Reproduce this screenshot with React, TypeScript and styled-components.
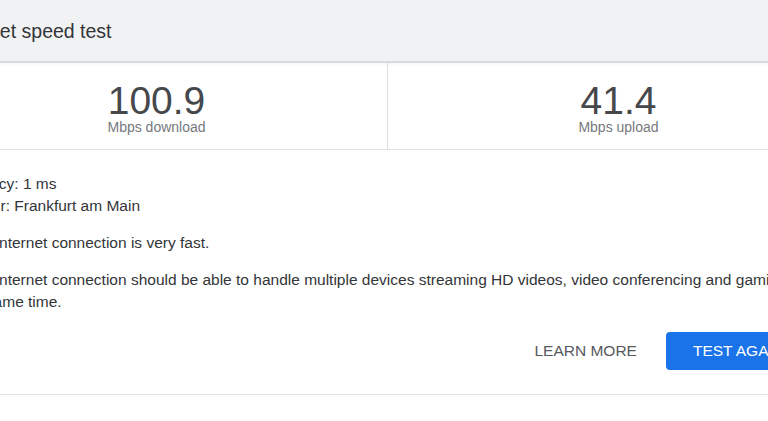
import React from "react";
import styled, { createGlobalStyle } from "styled-components";

const GlobalStyle = createGlobalStyle`
  html, body {
    margin: 0;
    padding: 0;
    background: #ffffff;
    overflow: hidden;
  }
  body {
    font-family: "Liberation Sans", Arial, Helvetica, sans-serif;
    -webkit-font-smoothing: antialiased;
  }
`;

const Viewport = styled.div`
  width: 768px;
  height: 421px;
  overflow: hidden;
  background: #ffffff;
`;

const Card = styled.section`
  width: 923px;
  margin-left: -74px;
  background: #ffffff;
  border-bottom: 1px solid #e3e3e3;
`;

const Header = styled.header`
  height: 61px;
  display: flex;
  align-items: center;
  padding-left: 24px;
  background: #f1f2f4;
  border-bottom: 2px solid #d8dadd;
  box-shadow: 0 2px 3px rgba(0, 0, 0, 0.04);
`;

const Title = styled.h1`
  margin: 0;
  padding-top: 1px;
  font-size: 19.5px;
  font-weight: 400;
  color: #333538;
`;

const Metrics = styled.div`
  display: grid;
  grid-template-columns: 461px 1fr;
  border-bottom: 1px solid #dfe0e2;
`;

const Metric = styled.div<{ $divider?: boolean }>`
  display: flex;
  flex-direction: column;
  align-items: center;
  padding: 21px 0 15px;
  border-left: ${(p) => (p.$divider ? "1px solid #dcdde0" : "none")};
`;

const Value = styled.div`
  font-size: 39px;
  line-height: 34px;
  color: #46484c;
`;

const Unit = styled.div`
  margin-top: 2px;
  font-size: 14px;
  line-height: 14px;
  color: #76797e;
`;

const Body = styled.div`
  padding: 23px 30px 24px 34px;
  color: #333538;
  font-size: 15.5px;
  line-height: 22px;
`;

const Stats = styled.div`
  display: flex;
  flex-direction: column;
`;

const Paragraph = styled.p`
  margin: 15px 0 0;
  max-width: 852px;
`;

const Actions = styled.div`
  display: flex;
  justify-content: flex-end;
  align-items: center;
  gap: 13px;
  margin-top: 19px;
  padding-right: 8px;
`;

const TextButton = styled.button`
  height: 38px;
  padding: 0 16px;
  border: none;
  background: transparent;
  font-family: inherit;
  font-size: 15.5px;
  color: #57595d;
`;

const PrimaryButton = styled.button`
  height: 38px;
  padding: 0 27px;
  border: none;
  border-radius: 4px;
  background: #1a73e8;
  font-family: inherit;
  font-size: 15.5px;
  color: #ffffff;
`;

export default function App() {
  return (
    <>
      <GlobalStyle />
      <Viewport>
        <Card>
          <Header>
            <Title>Internet speed test</Title>
          </Header>
          <Metrics>
            <Metric>
              <Value>100.9</Value>
              <Unit>Mbps download</Unit>
            </Metric>
            <Metric $divider>
              <Value>41.4</Value>
              <Unit>Mbps upload</Unit>
            </Metric>
          </Metrics>
          <Body>
            <Stats>
              <span>Latency: 1 ms</span>
              <span>Server: Frankfurt am Main</span>
            </Stats>
            <Paragraph>Your internet connection is very fast.</Paragraph>
            <Paragraph>
              Your internet connection should be able to handle multiple devices
              streaming HD videos, video conferencing and gaming at the same time.
            </Paragraph>
            <Actions>
              <TextButton>LEARN MORE</TextButton>
              <PrimaryButton>TEST AGAIN</PrimaryButton>
            </Actions>
          </Body>
        </Card>
      </Viewport>
    </>
  );
}
